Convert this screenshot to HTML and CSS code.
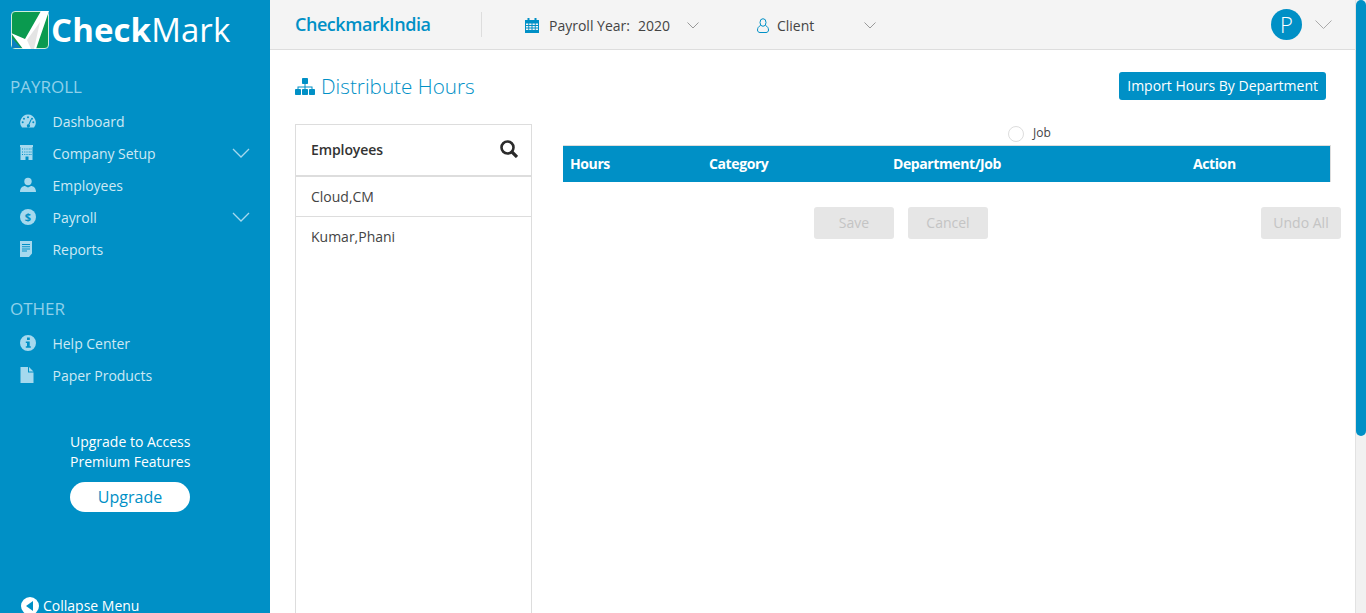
FILE: index.html
```html
<!DOCTYPE html>
<html>
<head>
    <title>Distribute Hours</title>
    <link rel="stylesheet" href="styles.css">
</head>
<body>

<div class="app">
    <!-- Sidebar -->
    <aside class="sidebar">
        <div class="logo">
            <svg class="logo-mark" width="38" height="38" viewBox="0 0 38 38">
                <rect x="0.5" y="0.5" width="37" height="37" rx="3.500" fill="#0a9a4f" stroke="#cfeedd"/>
                <path d="M1 27 L10 37 L1 37 Z" fill="#0b7fc0"/>
                <path d="M0 22 L14 28 L30 0 L38 0 L25 38 L12 38 Z" fill="#fff"/>
                <path d="M16 29 L29 11 L23 38 L20 38 Z" fill="#e4e4e4"/>
            </svg>
            <span class="logo-text"><b>Check</b>Mark</span>
        </div>

        <div class="nav-title">PAYROLL</div>
        <ul class="nav">
            <li>
                <svg class="nav-icon" viewBox="0 0 16 16"><path fill-rule="evenodd" d="M8 1.500A8 8 0 0 0 2 14.500h12A8 8 0 0 0 8 1.500zM8 3.200a1 1 0 1 1 0 2 1 1 0 0 1 0-2zM4 4.800a1 1 0 1 1 0 2 1 1 0 0 1 0-2zM12 4.800a1 1 0 1 1 0 2 1 1 0 0 1 0-2zM2.700 8.200a1 1 0 1 1 0 2 1 1 0 0 1 0-2zM13.300 8.200a1 1 0 1 1 0 2 1 1 0 0 1 0-2zM10.600 6.300l1 .4-2.200 5a1.500 1.500 0 1 1-1-.4z"/></svg>
                Dashboard
            </li>
            <li>
                <svg class="nav-icon" viewBox="0 0 16 16"><path fill-rule="evenodd" d="M0 0h13v2h-.5v13H8.500v-3.500h-3V15H.5V2H0zM2 3.500v1h1v-1zM4.300 3.500v1h1v-1zM6.500 3.500v1h1v-1zM8.700 3.500v1h1v-1zM10.500 3.500v1h1v-1zM2 6.500v1h1v-1zM4.300 6.500v1h1v-1zM6.500 6.500v1h1v-1zM8.700 6.500v1h1v-1zM10.500 6.500v1h1v-1zM2 9v1h1V9zM4.300 9v1h1V9zM6.500 9v1h1V9zM8.700 9v1h1V9zM10.500 9v1h1V9z"/></svg>
                Company Setup
                <svg class="nav-arrow" viewBox="0 0 18 10"><path d="M1 1l8 8 8-8"/></svg>
            </li>
            <li>
                <svg class="nav-icon" viewBox="0 0 16 16"><circle cx="8" cy="4.500" r="3.700"/><path d="M0 15c0-4 2.500-6 5-6l3 1.500L11 9c2.500 0 5 2 5 6z"/></svg>
                Employees
            </li>
            <li>
                <svg class="nav-icon" viewBox="0 0 16 16"><circle cx="8" cy="8" r="8"/><text x="8" y="12" class="dollar">$</text></svg>
                Payroll
                <svg class="nav-arrow" viewBox="0 0 18 10"><path d="M1 1l8 8 8-8"/></svg>
            </li>
            <li>
                <svg class="nav-icon" viewBox="0 0 16 16"><path fill-rule="evenodd" d="M0 0h12v12.500L9 16H0zM2 3v1h8V3zM2 5.200v1h8v-1zM2 7.400v1h8v-1zM2 9.600v1h5v-1z"/></svg>
                Reports
            </li>
        </ul>

        <div class="nav-title other">OTHER</div>
        <ul class="nav">
            <li>
                <svg class="nav-icon" viewBox="0 0 16 16"><path fill-rule="evenodd" d="M8 0a8 8 0 1 1 0 16A8 8 0 0 1 8 0zM7 2.500v2.600h2.800V2.500zM5.800 6.400v1.500H7v3.300H5.800v1.500h5v-1.500H9.700V6.400z"/></svg>
                Help Center
            </li>
            <li>
                <svg class="nav-icon" viewBox="0 0 16 16"><path d="M.5 0H8v5.500h5.500V16H.5zM9 0l4.500 4.500H9z"/></svg>
                Paper Products
            </li>
        </ul>

        <div class="upgrade">
            <p>Upgrade to Access<br>Premium Features</p>
            <a class="upgrade-btn">Upgrade</a>
        </div>

        <div class="collapse">
            <svg width="18" height="18" viewBox="0 0 18 18"><circle cx="9" cy="9" r="9" fill="#fff"/><path d="M5 9l7-5v10z" fill="#0090c6"/></svg>
            Collapse Menu
        </div>
    </aside>

    <div class="main">
        <!-- Top bar -->
        <header class="topbar">
            <div class="company">CheckmarkIndia</div>
            <div class="top-item year">
                <svg class="top-icon" width="14" height="15" viewBox="0 0 14 15"><path fill-rule="evenodd" d="M0 2h2.500V0h2v2h5V0h2v2H14v13H0zM1 5.500V7h2.300V5.500zM4.200 5.500V7h2.300V5.500zM7.500 5.500V7h2.300V5.500zM10.700 5.500V7H13V5.500zM1 8v1.500h2.300V8zM4.200 8v1.500h2.300V8zM7.500 8v1.500h2.300V8zM10.700 8v1.500H13V8zM1 10.500V12h2.300v-1.500zM4.200 10.500V12h2.300v-1.500zM7.500 10.500V12h2.300v-1.500zM10.700 10.500V12H13v-1.500z" fill="#0090c6"/></svg>
                <span>Payroll Year:</span><span class="year-value">2020</span>
                <svg class="top-arrow" width="12" height="7" viewBox="0 0 12 7"><path d="M.5.500L6 6 11.500.500"/></svg>
            </div>
            <div class="top-item client">
                <svg class="top-icon" width="12" height="15" viewBox="0 0 12 15" fill="none" stroke="#0090c6"><ellipse cx="6" cy="4.500" rx="3" ry="3.800"/><path d="M3.500 7.500C1.500 8.500.5 10 .5 12c0 1.500 1 2.500 2.500 2.500h6c1.500 0 2.500-1 2.500-2.500 0-2-1-3.500-3-4.500"/></svg>
                Client
                <svg class="top-arrow" width="12" height="7" viewBox="0 0 12 7"><path d="M.5.500L6 6 11.500.500"/></svg>
            </div>
            <div class="user">
                <span class="avatar">P</span>
                <svg class="user-arrow" width="17" height="9" viewBox="0 0 17 9"><path d="M.5.500l8 8 8-8"/></svg>
            </div>
        </header>

        <section class="content">
            <div class="page-head">
                <h1>
                    <svg width="20" height="17" viewBox="0 0 20 17" fill="#0090c6"><rect x="7" y="0" width="6" height="6" rx=".8"/><rect x="0" y="11" width="6" height="6" rx=".8"/><rect x="7" y="11" width="6" height="6" rx=".8"/><rect x="14" y="11" width="6" height="6" rx=".8"/><path d="M9.500 6h1v2.500H17.500V11h-1V9.500h-6V11h-1V9.500h-6V11h-1V8.500H9.500z"/></svg>
                    Distribute Hours
                </h1>
                <button class="btn-import">Import Hours By Department</button>
            </div>

            <div class="columns">
                <div class="employees">
                    <div class="emp-head">
                        Employees
                        <svg width="18" height="18" viewBox="0 0 18 18" fill="none" stroke="#2b2b2b"><circle cx="7.500" cy="7.500" r="6" stroke-width="2.600"/><path d="M12 12l5 5" stroke-width="3.200"/></svg>
                    </div>
                    <div class="emp-row">Cloud,CM</div>
                    <div class="emp-row">Kumar,Phani</div>
                </div>

                <div class="details">
                    <div class="radio-row">
                        <span class="radio"></span>
                        <span class="radio-label">Job</span>
                    </div>
                    <div class="grid-head">
                        <span class="col-hours">Hours</span>
                        <span class="col-cat">Category</span>
                        <span class="col-dept">Department/Job</span>
                        <span>Action</span>
                    </div>
                    <div class="actions">
                        <button class="btn-off">Save</button>
                        <button class="btn-off">Cancel</button>
                        <button class="btn-off undo">Undo All</button>
                    </div>
                </div>
            </div>
        </section>
    </div>
</div>

<div class="scrollbar"><div class="scroll-thumb"></div></div>

</body>
</html>
```

FILE: styles.css
```css
* {
    box-sizing: border-box;
}

html, body {
    margin: 0;
    height: 613px;
    overflow: hidden;
}

body {
    font-family: "Open Sans", sans-serif;
    font-size: 14px;
    color: #333;
    background-color: #fff;
}

.app {
    display: flex;
    height: 613px;
}

/* Sidebar */
.sidebar {
    width: 270px;
    height: 613px;
    flex-shrink: 0;
    background-color: #0090c6;
    color: #cde9f4;
    overflow: hidden;
}

.logo {
    display: flex;
    align-items: center;
    padding: 11px 0 0 11px;
    height: 49px;
}

.logo-text {
    font-size: 33px;
    line-height: 38px;
    color: #fff;
    margin-left: 2px;
    letter-spacing: 0.1px;
}

.logo-text b {
    font-weight: 700;
}

.nav-title {
    margin-top: 27px;
    padding-left: 10px;
    font-size: 17px;
    line-height: 22px;
    color: #8fd0ea;
}

.nav-title.other {
    margin-top: 33px;
}

.nav {
    list-style: none;
    margin: 7px 0 0;
    padding: 0;
}

.nav li {
    display: flex;
    align-items: center;
    height: 32px;
    padding-left: 20px;
    font-size: 14px;
    letter-spacing: -0.03px;
}

.nav-icon {
    width: 16px;
    height: 16px;
    margin-right: 16.500px;
    flex-shrink: 0;
    fill: #a5d9ee;
}

.dollar {
    font-size: 11px;
    font-weight: 700;
    text-anchor: middle;
    fill: #0090c6;
}

.nav-arrow {
    width: 18px;
    height: 10px;
    margin-left: auto;
    margin-right: 20px;
    fill: none;
    stroke: #a5d9ee;
    stroke-width: 1.300;
}

.upgrade {
    width: 120px;
    margin: 41px 0 0 70px;
    color: #fff;
}

.upgrade p {
    margin: 0;
    font-size: 14px;
    line-height: 20px;
    white-space: nowrap;
}

.upgrade-btn {
    display: block;
    height: 30px;
    margin-top: 10px;
    border-radius: 15px;
    background-color: #fff;
    color: #0090c6;
    font-size: 16px;
    line-height: 30px;
    text-align: center;
}

.collapse {
    display: flex;
    align-items: center;
    gap: 4px;
    margin: 84px 0 0 21px;
    font-size: 14px;
    color: #fff;
}

/* Top bar */
.main {
    flex: 1;
    min-width: 0;
}

.topbar {
    display: flex;
    align-items: center;
    height: 50px;
    padding-left: 25px;
    background-color: #f4f4f4;
    border-bottom: 1px solid #ddd;
}

.company {
    width: 187px;
    height: 25px;
    border-right: 1px solid #ddd;
    color: #0090c6;
    font-size: 18px;
    font-weight: 600;
    line-height: 24px;
    letter-spacing: -0.45px;
}

.top-item {
    display: flex;
    align-items: center;
    padding-top: 2px;
    color: #444;
    font-size: 14px;
}

.top-icon {
    margin-right: 10px;
    margin-top: -1px;
}

.top-arrow {
    fill: none;
    stroke: #999;
}

.year {
    margin-left: 43px;
}

.year-value {
    margin-left: 8px;
}

.year .top-arrow {
    margin-left: 17px;
}

.client {
    margin-left: 58px;
}

.client .top-icon {
    margin-right: 8px;
}

.client .top-arrow {
    margin-left: 50px;
}

.user {
    display: flex;
    align-items: center;
    margin-left: auto;
    margin-right: 34px;
}

.avatar {
    width: 31px;
    height: 31px;
    border-radius: 50%;
    background-color: #0090c6;
    color: #fff;
    font-size: 22px;
    font-weight: 300;
    line-height: 30px;
    text-align: center;
}

.user-arrow {
    margin-left: 13px;
    fill: none;
    stroke: #aaa;
}

/* Content */
.content {
    padding: 0 25px;
}

.page-head {
    display: flex;
    justify-content: space-between;
    align-items: center;
    height: 74px;
    padding: 0 15px 2px 0;
}

.page-head h1 {
    display: flex;
    align-items: center;
    gap: 6px;
    margin: 0;
    color: #0090c6;
    font-size: 20.700px;
    font-weight: 300;
}

.btn-import {
    height: 28px;
    padding: 0 8px 2px;
    border: none;
    border-radius: 3px;
    background-color: #0090c6;
    color: #fff;
    font-family: "Open Sans", sans-serif;
    font-size: 14px;
}

.columns {
    display: flex;
}

.employees {
    width: 237px;
    height: 489px;
    flex-shrink: 0;
    border: 1px solid #ddd;
    border-bottom: none;
}

.emp-head {
    display: flex;
    justify-content: space-between;
    align-items: center;
    height: 52px;
    padding: 0 13px 2px 15px;
    border-bottom: 2px solid #ddd;
    color: #333;
    font-weight: 600;
    letter-spacing: -0.1px;
}

.emp-row {
    height: 40px;
    padding-left: 15px;
    border-bottom: 1px solid #ddd;
    line-height: 39px;
    color: #444;
}

.emp-row:last-child {
    border-bottom: none;
}

.details {
    width: 778px;
    margin-left: 31px;
}

.radio-row {
    display: flex;
    align-items: center;
    height: 19px;
    margin-bottom: 2px;
}

.radio {
    width: 16px;
    height: 16px;
    margin-left: 445px;
    border: 1px solid #ddd;
    border-radius: 50%;
    background-color: #fff;
}

.radio-label {
    margin: 0 0 2px 9px;
    font-size: 12px;
    line-height: 16px;
    color: #444;
}

.grid-head {
    display: flex;
    align-items: center;
    width: 768px;
    height: 37px;
    padding: 0 0 2px 7px;
    background-color: #0090c6;
    border-top: 1px solid #ddd;
    border-right: 1px solid #ddd;
    color: #fff;
    font-weight: 700;
    letter-spacing: -0.4px;
}

.col-hours {
    width: 139px;
}

.col-cat {
    width: 184px;
}

.col-dept {
    width: 300px;
}

.actions {
    display: flex;
    gap: 14px;
    margin-top: 25px;
    padding-left: 251px;
}

.btn-off {
    width: 80px;
    height: 32px;
    padding: 0 0 2px;
    border: none;
    border-radius: 3px;
    background-color: #e6e6e6;
    color: #c4c4c4;
    font-family: "Open Sans", sans-serif;
    font-size: 14px;
}

.btn-off.undo {
    margin-left: auto;
}

/* Fake scrollbar drawn over the page */
.scrollbar {
    position: absolute;
    top: 0;
    right: 0;
    width: 11px;
    height: 613px;
    background-color: #f1f1f1;
    border-left: 1px solid #e2e2e2;
}

.scroll-thumb {
    height: 436px;
    border-radius: 5px;
    background-color: #0090c6;
}
```
